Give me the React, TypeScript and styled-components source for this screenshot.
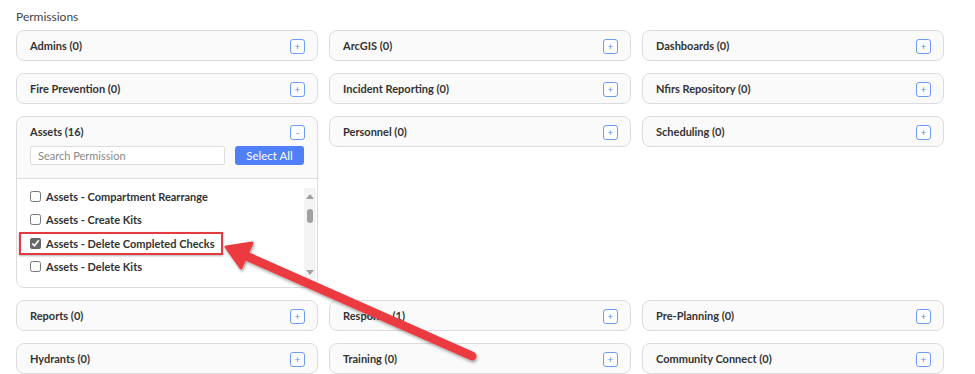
import styled, { createGlobalStyle } from 'styled-components';

const GlobalStyle = createGlobalStyle`
    body {
        margin: 0;
        background: #fff;
        font-family: Lato, "Open Sans", sans-serif;
    }
`;

const modules = [
    { name: 'Admins', count: 0 },
    { name: 'ArcGIS', count: 0 },
    { name: 'Dashboards', count: 0 },
    { name: 'Fire Prevention', count: 0 },
    { name: 'Incident Reporting', count: 0 },
    { name: 'Nfirs Repository', count: 0 },
    { name: 'Assets', count: 16, open: true },
    { name: 'Personnel', count: 0 },
    { name: 'Scheduling', count: 0 },
    { name: 'Reports', count: 0 },
    { name: 'Response', count: 1 },
    { name: 'Pre-Planning', count: 0 },
    { name: 'Hydrants', count: 0 },
    { name: 'Training', count: 0 },
    { name: 'Community Connect', count: 0 },
];

const assetPermissions = [
    { label: 'Assets - Compartment Rearrange', checked: false },
    { label: 'Assets - Create Kits', checked: false },
    { label: 'Assets - Delete Completed Checks', checked: true, highlight: true },
    { label: 'Assets - Delete Kits', checked: false },
];

const App = () => {
    return (
        <>
            <GlobalStyle />
            <Page>
                <Title>Permissions</Title>
                <Grid>
                    {modules.map((m) => (
                        <Card key={m.name}>
                            <CardHeader>
                                <CardTitle>{m.name} ({m.count})</CardTitle>
                                <ToggleButton>{m.open ? '-' : '+'}</ToggleButton>
                            </CardHeader>
                            {m.open && (
                                <>
                                    <SearchRow>
                                        <SearchInput placeholder="Search Permission" />
                                        <SelectAllButton>Select All</SelectAllButton>
                                    </SearchRow>
                                    <ListArea>
                                        <List>
                                            {assetPermissions.map((p) => (
                                                <Item key={p.label} $highlight={p.highlight}>
                                                    <Check type="checkbox" defaultChecked={p.checked} />
                                                    <span>{p.label}</span>
                                                </Item>
                                            ))}
                                        </List>
                                        <ScrollTrack>
                                            <ScrollArrow $up />
                                            <ScrollThumb />
                                            <ScrollArrow />
                                        </ScrollTrack>
                                    </ListArea>
                                </>
                            )}
                        </Card>
                    ))}
                </Grid>
                <ArrowOverlay viewBox="0 0 975 374" width="975" height="374">
                    <defs>
                        <filter id="shadow" x="-20%" y="-20%" width="140%" height="140%">
                            <feDropShadow dx="1" dy="2" stdDeviation="1.5" floodColor="#000" floodOpacity="0.35" />
                        </filter>
                    </defs>
                    <g filter="url(#shadow)" fill="#ec3b40" stroke="#ec3b40">
                        <line x1="244" y1="255" x2="472" y2="356" strokeWidth="9" strokeLinecap="round" />
                        <polygon points="226,247 252,243 241,268" strokeWidth="3" strokeLinejoin="round" />
                    </g>
                </ArrowOverlay>
            </Page>
        </>
    );
};

const Page = styled.div`
    position: relative;
    width: 975px;
    height: 374px;
    overflow: hidden;
    padding: 9px 0 0 16px;
    box-sizing: border-box;
`;

const Title = styled.div`
    font-size: 12px;
    line-height: 16px;
    color: #444;
    margin-bottom: 5px;
`;

const Grid = styled.div`
    display: grid;
    grid-template-columns: repeat(3, 302px);
    column-gap: 11px;
    row-gap: 12px;
    align-items: start;
`;

const Card = styled.div`
    border: 1px solid #dcdcdc;
    border-radius: 8px;
    background: #fafafa;
    overflow: hidden;
`;

const CardHeader = styled.div`
    height: 29px;
    display: flex;
    align-items: center;
    justify-content: space-between;
    padding: 0 12px 0 13px;
`;

const CardTitle = styled.div`
    font-size: 11px;
    font-weight: 700;
    color: #333;
`;

const ToggleButton = styled.div`
    width: 13px;
    height: 13px;
    border: 1px solid #6d9cf3;
    border-radius: 3px;
    background: #fff;
    color: #5b8def;
    font-size: 10px;
    line-height: 12px;
    text-align: center;
    margin-top: 2px;
`;

const SearchRow = styled.div`
    display: flex;
    gap: 10px;
    padding: 0 13px 13px 13px;
    border-bottom: 1px solid #dcdcdc;
`;

const SearchInput = styled.input`
    flex: 1;
    height: 19px;
    box-sizing: border-box;
    border: 1px solid #ddd;
    border-radius: 2px;
    padding: 0 7px;
    font-family: Lato, sans-serif;
    font-size: 11px;
    color: #333;
    background: #fff;
    outline: none;

    &::placeholder {
        color: #888;
    }
`;

const SelectAllButton = styled.button`
    width: 69px;
    height: 19px;
    border: none;
    border-radius: 3px;
    background: #4f80f7;
    color: #fff;
    font-family: Lato, sans-serif;
    font-size: 11.5px;
    padding: 0;
`;

const ListArea = styled.div`
    display: flex;
    height: 108px;
    background: #fff;
    padding: 0 1px 0 12px;
`;

const List = styled.div`
    flex: 1;
    display: flex;
    flex-direction: column;
    padding-top: 6px;
`;

const Item = styled.label<{ $highlight?: boolean }>`
    position: relative;
    display: flex;
    align-items: center;
    gap: 5px;
    height: 23.3px;
    font-size: 11px;
    font-weight: 700;
    color: #333;

    ${(p) =>
        p.$highlight &&
        `
        &::after {
            content: "";
            position: absolute;
            left: -10px;
            top: 0px;
            width: 200px;
            height: 19px;
            border: 2px solid #e53a3f;
            box-shadow: 0 1px 2px rgba(0, 0, 0, 0.3);
        }
    `}
`;

const Check = styled.input`
    width: 11px;
    height: 11px;
    margin: 0 0 0 1px;
    accent-color: #666;
`;

const ScrollTrack = styled.div`
    width: 12px;
    margin: 9px 0 8px;
    background: #f4f4f4;
    display: flex;
    flex-direction: column;
    align-items: center;
    justify-content: space-between;
    padding: 6px 0 4px;
    box-sizing: border-box;
`;

const ScrollArrow = styled.div<{ $up?: boolean }>`
    width: 0;
    height: 0;
    border-left: 4px solid transparent;
    border-right: 4px solid transparent;
    ${(p) => (p.$up ? 'border-bottom: 5px solid #a0a0a0;' : 'border-top: 5px solid #a0a0a0;')}
`;

const ScrollThumb = styled.div`
    width: 6px;
    height: 14px;
    border-radius: 3px;
    background: #a0a0a0;
    margin-bottom: 38px;
`;

const ArrowOverlay = styled.svg`
    position: absolute;
    left: 0;
    top: 0;
    pointer-events: none;
`;

export default App;
